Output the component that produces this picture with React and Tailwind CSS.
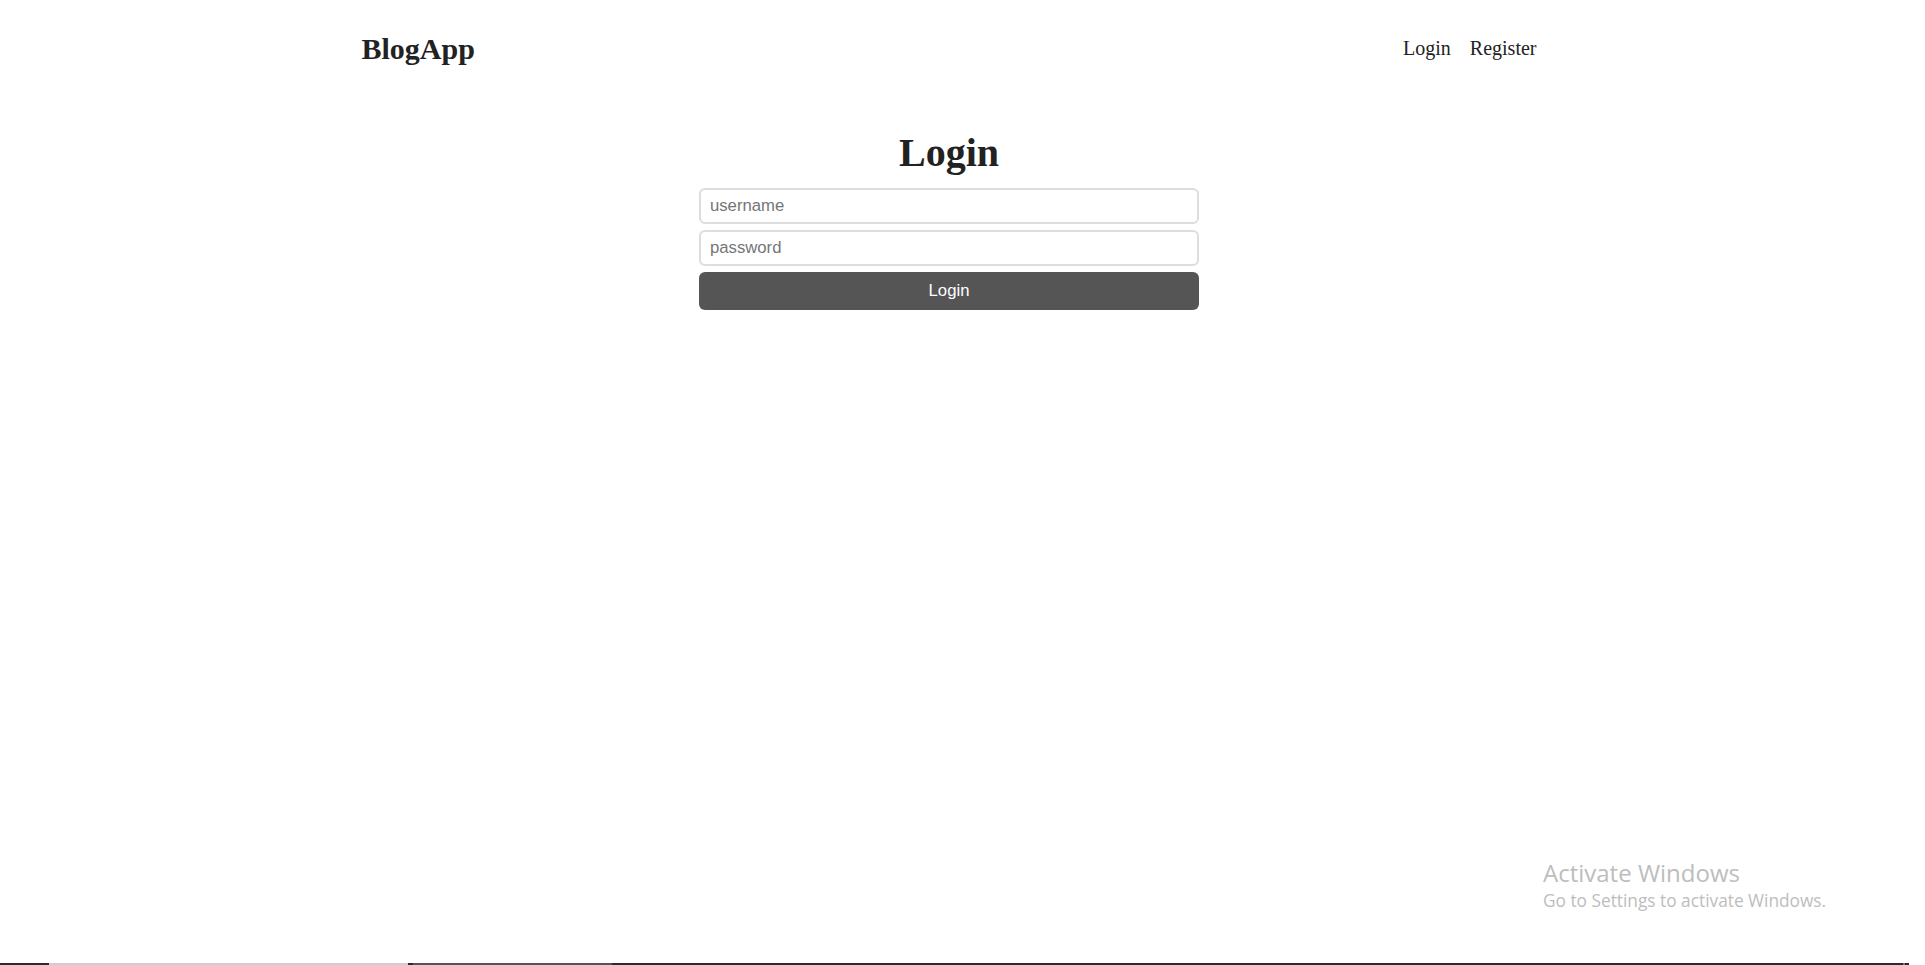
import React from "react";

export default function App() {
  return (
    <div className="relative min-h-screen flex flex-col bg-white text-[#222] font-['Liberation_Serif','Times_New_Roman',serif]">
      <div className="pr-[27px]">
        <div className="mx-auto w-[1175px] pt-[31px]">
          <header className="flex items-center justify-between h-[35px]">
            <a className="text-[30px] font-bold leading-[35px] text-[#222]">BlogApp</a>
            <nav className="flex gap-[19px] text-[20px] leading-[23px] text-[#222]">
              <a>Login</a>
              <a>Register</a>
            </nav>
          </header>
          <form className="mx-auto w-[500px] mt-[64px]">
            <h1 className="text-center text-[40px] font-bold leading-[46px] mb-[12px] text-[#222]">Login</h1>
            <input
              type="text"
              placeholder="username"
              className="block w-full h-[36px] mb-[6px] px-[9px] border-2 border-[#ddd] rounded-[6px] bg-white text-[16.7px] leading-[19px] font-['Liberation_Sans',Arial,sans-serif] placeholder:text-[#757575] outline-none"
            />
            <input
              type="password"
              placeholder="password"
              className="block w-full h-[36px] mb-[6px] px-[9px] border-2 border-[#ddd] rounded-[6px] bg-white text-[16.7px] leading-[19px] font-['Liberation_Sans',Arial,sans-serif] placeholder:text-[#757575] outline-none"
            />
            <button
              type="button"
              className="block w-full h-[38px] bg-[#555] text-white rounded-[6px] text-[16.7px] leading-[20px] font-['Liberation_Sans',Arial,sans-serif]"
            >
              Login
            </button>
          </form>
        </div>
      </div>

      <div className="absolute left-[1543px] top-[857px] text-[#bdbdbd] font-['Open_Sans','Noto_Sans',sans-serif] select-none">
        <div className="text-[24px] leading-[31px]">Activate Windows</div>
        <div className="text-[17.3px] leading-[22px] mt-[2px]">Go to Settings to activate Windows.</div>
      </div>

      <div className="mt-auto flex h-[2px] w-full">
        <div className="w-[49px] bg-[#2b2b2b]" />
        <div className="w-[359px] bg-[#cfcfcf]" />
        <div className="w-[5px] bg-[#2b2b2b]" />
        <div className="w-[199px] bg-[#555]" />
        <div className="w-[1291px] bg-[#2b2b2b]" />
        <div className="w-[2px] bg-[#777]" />
        <div className="w-[4px] bg-[#2b2b2b]" />
        <div className="flex-1 bg-white" />
      </div>
    </div>
  );
}
